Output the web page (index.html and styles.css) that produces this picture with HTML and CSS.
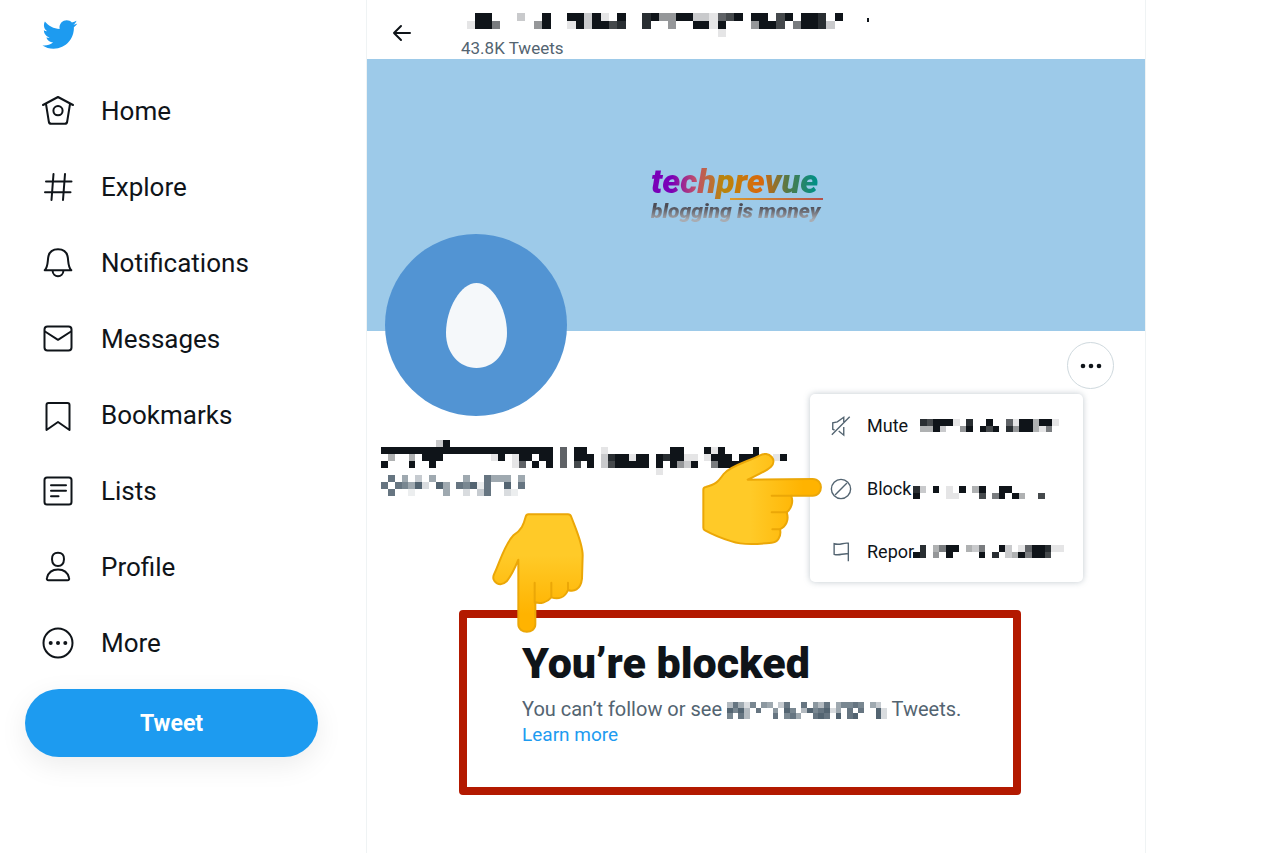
FILE: index.html
```html
<!DOCTYPE html>
<html lang="en">
<head>
    <meta charset="UTF-8">
    <meta name="viewport" content="width=device-width, initial-scale=1">
    <title>Profile / Twitter</title>
    <link rel="stylesheet" href="styles.css">
</head>
<body>
<div class="layout">
    <header class="sidebar">
        <a class="logo" href="#" aria-label="Twitter">
            <svg viewBox="0 0 24 24"><path d="M23.643 4.937c-.835.37-1.732.62-2.675.733.962-.576 1.7-1.49 2.048-2.578-.9.534-1.897.922-2.958 1.13-.85-.904-2.06-1.47-3.4-1.47-2.572 0-4.658 2.086-4.658 4.66 0 .364.042.718.12 1.06-3.873-.195-7.304-2.05-9.602-4.868-.4.69-.63 1.49-.63 2.342 0 1.616.823 3.043 2.072 3.878-.764-.025-1.482-.234-2.11-.583v.06c0 2.257 1.605 4.14 3.737 4.568-.392.106-.803.162-1.227.162-.3 0-.593-.028-.877-.082.593 1.85 2.313 3.198 4.352 3.234-1.595 1.25-3.604 1.995-5.786 1.995-.376 0-.747-.022-1.112-.065 2.062 1.323 4.51 2.093 7.14 2.093 8.57 0 13.255-7.098 13.255-13.254 0-.2-.005-.402-.014-.602.91-.658 1.7-1.477 2.323-2.41z"/></svg>
        </a>
        <nav class="nav">
            <a href="#">
                <svg viewBox="0 0 36 36"><path d="M3 12L18 4l15 8M6 11l2.800 17.500q.3 2.300 2.500 2.300h13.400q2.200 0 2.500-2.300L30 11"/><circle cx="18" cy="17.700" r="4.600"/></svg>
                <span>Home</span>
            </a>
            <a href="#">
                <svg viewBox="0 0 36 36"><path d="M13.500 5l-2 26M25 5l-2 26M6 12.500h25.500M5 23.300h25.500"/></svg>
                <span>Explore</span>
            </a>
            <a href="#">
                <svg viewBox="0 0 36 36"><path d="M4.700 25.300C8 22 7.500 17 8.200 12.500 9 7 13 4.300 18 4.300S27 7 27.800 12.500C28.500 17 28 22 31.300 25.300zM12.500 25.500c.5 7.500 10.500 7.500 11 0"/></svg>
                <span>Notifications</span>
            </a>
            <a href="#">
                <svg viewBox="0 0 36 36"><rect x="4.500" y="5.500" width="27" height="24" rx="3"/><path d="M5 10.500l13 8.300 13-8.300"/></svg>
                <span>Messages</span>
            </a>
            <a href="#">
                <svg viewBox="0 0 36 36"><path d="M6.500 33V8q0-2 2-2h19q2 0 2 2v25L18 25z"/></svg>
                <span>Bookmarks</span>
            </a>
            <a href="#">
                <svg viewBox="0 0 36 36"><rect x="4.500" y="4.500" width="27" height="27" rx="2.500"/><path d="M11 12.300h15M11 17.800h15M11 23.300h7.500"/></svg>
                <span>Lists</span>
            </a>
            <a href="#">
                <svg viewBox="0 0 36 36"><path d="M18 3.700c4 0 6.200 2.500 6 6.500-.2 4.300-2.500 6.700-6 6.700s-5.800-2.400-6-6.700c-.2-4 2-6.500 6-6.500zM8.500 31.300c-1.500 0-2-1-1.500-2.500C8.300 23.500 12.500 20.500 18 20.500s9.700 3 11 8.300c.5 1.500 0 2.500-1.500 2.500z"/></svg>
                <span>Profile</span>
            </a>
            <a href="#">
                <svg viewBox="0 0 36 36"><circle cx="18" cy="18" r="14.500"/><g class="dots"><circle cx="10.700" cy="18" r="2"/><circle cx="18" cy="18" r="2"/><circle cx="25.300" cy="18" r="2"/></g></svg>
                <span>More</span>
            </a>
        </nav>
        <button class="tweet-btn" type="button">Tweet</button>
    </header>

    <main class="column">
        <div class="topbar">
            <button class="back" type="button" aria-label="Back">
                <svg viewBox="0 0 20 18"><path d="M18 9H2M9 2L2 9l7 7"/></svg>
            </button>
            <div class="topbar-text">
                <div class="topbar-name">
                    <svg class="mosaic mosaic-top" data-rows=".99...2..9..99291.9..894499221679.99.79.998.9 1995....49..1929978..8..4..9919...4997.59982. ..............................1"></svg>
                    <i class="tick"></i>
                </div>
                <span>43.8K Tweets</span>
            </div>
        </div>

        <div class="banner">
            <div class="brand">
                <div class="brand-name">techprevue</div>
                <div class="brand-line"></div>
                <div class="brand-tag">blogging is money</div>
            </div>
        </div>

        <section class="profile">
            <div class="avatar">
                <svg viewBox="0 0 61 85"><path d="M30.500 0C46 0 61 25 61 50 61 70 48 85 30.500 85S0 70 0 50C0 25 15 0 30.500 0z"/></svg>
            </div>
            <button class="more-btn" type="button" aria-label="More">
                <svg viewBox="0 0 22 6"><circle cx="3" cy="3" r="2.300"/><circle cx="11" cy="3" r="2.300"/><circle cx="19" cy="3" r="2.300"/></svg>
            </button>
            <div class="names">
                <svg class="mosaic mosaic-name" data-rows="........29................................................. 9999999999999999999999999.6.99..1.........99...919....9.... .3..3.999.......19.199.99.6.999.2899199.989911.1999.999..19 9...9..9...........16.9.9.6.7.9.2799999.9.9429..599999..... ........................................1"></svg>
                <svg class="mosaic mosaic-handle" data-rows=".8.5.3.5....5..8555.5 8.87592.95.87918..9.8 .8..1....5..2.38..21."></svg>
            </div>

            <div class="menu">
                <button type="button">
                    <svg class="icon" viewBox="0 0 24 24"><path d="M2 21.500L21.500 2M5 16.500L3 15.500V8.500L8 7.500 15 2.500v5M15 13v9L9.500 17.500"/></svg>
                    <span>Mute</span>
                    <svg class="mosaic mosaic-mute" data-rows="879991.8..9..61993991 3392..49.979.8499315."></svg>
                </button>
                <button type="button">
                    <svg class="icon" viewBox="0 0 24 24"><circle cx="12" cy="12" r="10.500"/><path d="M5.500 18.500l13-13"/></svg>
                    <span>Block</span>
                    <svg class="mosaic mosaic-block" data-rows="82.9.1.9.39..99..... 9....11...7.59.93..7"></svg>
                </button>
                <button type="button">
                    <svg class="icon" viewBox="0 0 24 24"><path d="M20 22V2.500C14.500 1.500 11 5 4.500 3v11.500c6 2 9.500-1.500 15.500-.5"/></svg>
                    <span>Repor</span>
                    <svg class="mosaic mosaic-report" data-rows=".8.3599.325..92.1699811. 98.4.9....9.8.2395997..."></svg>
                </button>
            </div>

            <svg class="hand-right" viewBox="336 69 360 276">
                <defs>
                    <linearGradient id="skinRight" x1="0" x2="1" y1="0" y2="0"><stop offset=".4" stop-color="#ffca28"/><stop offset=".85" stop-color="#ffb300"/></linearGradient>
                </defs>
                <path fill="url(#skinRight)" d="M347 171C376 164 384 156 401 132 420 108 468 97 510 76 541 62 562 92 543 110 527 125 495 138 473 149L668 147C701 147 701 197 668 197L603 197C612 215 603 237 590 247 598 270 588 290 570 298 575 320 562 338 545 338 500 343 455 345 425 334 395 325 365 312 345 301Q340 299 340 293V179Q340 172 347 171z"/>
                <path fill="none" d="M545 197h60M545 247h45M547 298h22"/>
            </svg>
        </section>

        <section class="blocked">
            <svg class="hand-down" viewBox="126 38 276 362">
                <defs>
                    <linearGradient id="skinDown" x1="0" x2="0" y1="0" y2="1"><stop offset=".35" stop-color="#ffca28"/><stop offset=".85" stop-color="#ffb300"/></linearGradient>
                </defs>
                <path fill="url(#skinDown)" d="M235 42H354Q361 42 364 50C380 92 398 130 398 165L396 235C392 270 370 275 354 269 345 292 325 298 304 291 290 308 270 310 256 306L256 372C256 402 205 402 205 372L205 178C196 200 185 225 170 243 150 262 122 245 132 222 150 185 162 135 190 105 215 90 221 72 227 49Q229 42 235 42z"/>
                <path fill="none" d="M254 247v60M304 247v42M354 247v20"/>
            </svg>
            <h1>You’re blocked</h1>
            <p>You can’t follow or see <svg class="mosaic mosaic-user" data-rows="48527.65.38..8.648.57787.53. 9794.8..6.97.4978925.8.8..92 7.84....8.785..898.9.89...92"></svg> Tweets.</p>
            <a href="#">Learn more</a>
        </section>
    </main>
</div>
<script src="mosaic.js"></script>
</body>
</html>
```
FILE: styles.css
```css
* {
    box-sizing: border-box;
}
body {
    margin: 0;
    font-family: Roboto, "Liberation Sans", sans-serif;
    color: #0f1419;
    background-color: #fff;
}
button {
    border: none;
    padding: 0;
    background: none;
    color: inherit;
    font: inherit;
    cursor: pointer;
}
a {
    color: #1d9bf0;
    text-decoration: none;
}
svg {
    display: block;
}

.layout {
    display: flex;
    min-height: 100vh;
    padding-right: 134px;
}

/* sidebar */
.sidebar {
    flex: 0 0 366px;
    padding: 16px 48px 0 25px;
}
.logo {
    display: block;
    width: 37px;
    height: 57px;
    margin-left: 16px;
}
.logo svg {
    width: 37px;
    fill: #1d9bf0;
}
.nav a {
    display: flex;
    align-items: center;
    gap: 25px;
    height: 76px;
    padding-left: 15px;
    font-size: 26px;
    color: #0f1419;
}
.nav svg {
    width: 36px;
    height: 36px;
    fill: none;
    stroke: #0f1419;
    stroke-width: 2;
    stroke-linecap: round;
    stroke-linejoin: round;
}
.nav .dots {
    fill: #0f1419;
    stroke: none;
}
.tweet-btn {
    display: block;
    width: 100%;
    height: 68px;
    margin-top: 8px;
    border-radius: 34px;
    background-color: #1d9bf0;
    box-shadow: 0 8px 28px rgba(0, 0, 0, 0.08);
    color: #fff;
    font-size: 23px;
    font-weight: 700;
}

/* main column */
.column {
    flex: 1;
    min-width: 0;
    border-left: 1px solid #eff3f4;
    border-right: 1px solid #eff3f4;
}
.topbar {
    display: flex;
    height: 59px;
    padding: 13px 25px 0;
}
.back {
    width: 20px;
    height: 40px;
}
.back svg {
    width: 20px;
    height: 18px;
    fill: none;
    stroke: #0f1419;
    stroke-width: 2;
    stroke-linecap: round;
    stroke-linejoin: round;
}
.topbar-text {
    margin-left: 49px;
    font-size: 17px;
    line-height: 20px;
    color: #536471;
}
.topbar-name {
    display: flex;
    height: 25px;
    padding-left: 6px;
}
.tick {
    width: 2px;
    height: 4px;
    margin: 5px 0 0 24px;
    background-color: #0f1419;
}

/* pixelated names */
.mosaic {
    flex: none;
    fill: #0f1419;
    shape-rendering: crispEdges;
}
.mosaic-top {
    width: 376px;
    height: 24px;
}
.mosaic-name {
    width: 406px;
    height: 35px;
}
.mosaic-handle {
    width: 144px;
    height: 21px;
    fill: #536471;
}
.mosaic-mute {
    width: 139px;
    height: 13px;
    margin-left: 7px;
}
.mosaic-block {
    width: 132px;
    height: 13px;
    margin-top: 8px;
}
.mosaic-report {
    width: 158px;
    height: 13px;
}
.mosaic-user {
    display: inline-block;
    width: 160px;
    height: 17px;
    vertical-align: -3px;
    fill: #536471;
}

.banner {
    display: flex;
    justify-content: center;
    height: 272px;
    padding: 104px 38px 0 0;
    background-color: #9dcae9;
}
.brand {
    width: 172px;
    font-style: italic;
    font-weight: 900;
    white-space: nowrap;
}
.brand-name {
    background: linear-gradient(90deg, #7a00b8 12%, #c0506a 26%, #b8860b 42%, #d9680c 64%, #4f7a4a 80%, #008f86 96%);
    background-clip: text;
    -webkit-background-clip: text;
    color: transparent;
    font-size: 34px;
    line-height: 36px;
}
.brand-line {
    width: 93px;
    height: 2px;
    margin: -1px 0 0 auto;
    background: linear-gradient(90deg, #dc9a2c, #b5504a);
}
.brand-tag {
    background: linear-gradient(180deg, #4c4c55 30%, #a9acb2 90%);
    background-clip: text;
    -webkit-background-clip: text;
    color: transparent;
    font-size: 21px;
    line-height: 22px;
}

.profile {
    position: relative;
    height: 279px;
    padding: 11px 31px 0 14px;
}
.avatar {
    position: absolute;
    top: -97px;
    left: 18px;
    display: flex;
    justify-content: center;
    width: 182px;
    height: 182px;
    padding-top: 49px;
    border-radius: 50%;
    background-color: #5294d3;
}
.avatar svg {
    width: 61px;
    height: 85px;
    fill: #f5f8fa;
}
.more-btn {
    display: flex;
    align-items: center;
    justify-content: center;
    width: 47px;
    height: 47px;
    margin-left: auto;
    border: 1px solid #cfd9de;
    border-radius: 50%;
}
.more-btn svg {
    width: 22px;
    fill: #0f1419;
}
.names {
    padding-top: 51px;
}

.menu {
    position: absolute;
    top: 63px;
    right: 62px;
    width: 273px;
    height: 188px;
    border-radius: 5px;
    background-color: #fff;
    box-shadow: 0 0 6px rgba(101, 119, 134, 0.4), 0 0 0 6px #fff;
}
.menu button {
    display: flex;
    align-items: center;
    width: 100%;
    height: 63px;
    padding-left: 20px;
    font-size: 18px;
    text-align: left;
}
.menu span {
    width: 46px;
    margin-left: 15px;
}
.menu .icon {
    width: 22px;
    height: 22px;
    fill: none;
    stroke: #536471;
    stroke-width: 1.5;
}

.hand-right, .hand-down {
    position: absolute;
    stroke: #eba707;
    stroke-width: 6;
    stroke-linecap: round;
    stroke-linejoin: round;
}
.hand-right {
    top: 122px;
    right: 323px;
    width: 120px;
}
.hand-down {
    top: -105px;
    left: 25px;
    width: 92px;
}

.blocked {
    position: relative;
    height: 185px;
    margin: 0 124px 0 92px;
    padding: 20px 0 0 55px;
    border: 8px solid #b31900;
    border-radius: 4px;
    font-size: 19px;
    line-height: 26px;
    color: #536471;
}
.blocked h1 {
    margin: 0 0 8px;
    font-size: 43px;
    font-weight: 900;
    line-height: 50px;
    color: #0f1419;
}
.blocked p {
    margin: 0;
    font-size: 20px;
}
```
FILE: mosaic.js
```js
// each character is one cell: "." is empty, 1-9 is how dark it is
document.querySelectorAll('.mosaic').forEach(function(svg) {
    var rows = svg.dataset.rows.split(' ')

    svg.setAttribute('viewBox', '0 0 ' + rows[0].length + ' ' + rows.length)
    svg.setAttribute('preserveAspectRatio', 'none')

    rows.forEach(function(row, y) {
        row.split('').forEach(function(cell, x) {
            if (cell === '.') return
            var rect = document.createElementNS('http://www.w3.org/2000/svg', 'rect')
            rect.setAttribute('x', x)
            rect.setAttribute('y', y)
            rect.setAttribute('width', 1)
            rect.setAttribute('height', 1)
            rect.setAttribute('fill-opacity', cell / 9)
            svg.appendChild(rect)
        })
    })
})
```
